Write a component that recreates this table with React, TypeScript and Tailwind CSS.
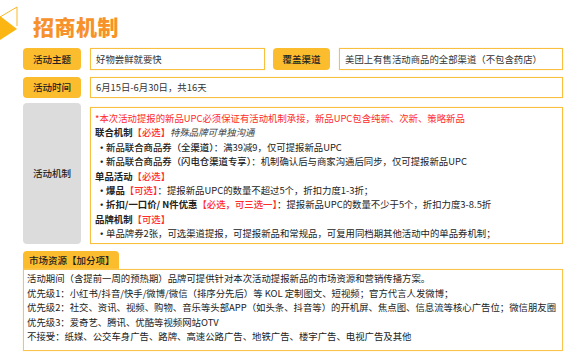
import React from "react"

const font = { fontFamily: '"Noto Sans CJK SC", "Noto Sans", sans-serif' }

function Label({ children, className = "" }: { children: React.ReactNode; className?: string }) {
  return (
    <div
      className={`flex shrink-0 items-center justify-center rounded-[4px] bg-[#fbbd2d] text-[9.5px] font-medium text-[#222] ${className}`}
    >
      {children}
    </div>
  )
}

function Value({ children, className = "" }: { children: React.ReactNode; className?: string }) {
  return (
    <div
      className={`flex items-center border border-[#f9bf3f] bg-white pl-[5px] text-[9.4px] text-[#333] shadow-[0_0_1px_#fde2a0] ${className}`}
    >
      {children}
    </div>
  )
}

function Red({ children }: { children: React.ReactNode }) {
  return <span className="font-medium text-[#ff2a2a]">{children}</span>
}

function Bullet({ children }: { children: React.ReactNode }) {
  return (
    <div className="flex whitespace-nowrap">
      <span className="w-[11px] pl-[2px] font-bold">•</span>
      <span>{children}</span>
    </div>
  )
}

export default function App() {
  return (
    <div className="h-[360px] w-[570px] overflow-hidden bg-white" style={font}>
      {/* Header */}
      <div className="flex h-[48px] items-start">
        <svg width="20" height="44" viewBox="0 0 20 44" className="shrink-0">
          <polyline points="0,17 17,7 17,26" fill="none" stroke="#f9b82a" strokeWidth="1" />
          <polygon points="0,16 17,29 0,40" fill="#fbb614" />
        </svg>
        <h1 className="ml-[13px] mt-[15px] text-[21px] font-black leading-[23px] tracking-[0.5px] text-[#f7922a]">
          招商机制
        </h1>
      </div>

      <div className="flex flex-col pl-[23px] pr-[7px]">
        {/* Row 1 */}
        <div className="flex h-[22px] gap-[9px]">
          <Label className="w-[58px]">活动主题</Label>
          <Value className="w-[175px]">好物尝鲜就要快</Value>
          <Label className="ml-[-1px] w-[57px]">覆盖渠道</Label>
          <Value className="flex-1">美团上有售活动商品的全部渠道（不包含药店）</Value>
        </div>

        {/* Row 2 */}
        <div className="mt-[7px] flex h-[21px] gap-[9px]">
          <Label className="w-[58px]">活动时间</Label>
          <Value className="flex-1">6月15日-6月30日，共16天</Value>
        </div>

        {/* Row 3 */}
        <div className="mt-[5px] flex h-[141px] gap-[9px]">
          <div className="flex w-[58px] shrink-0 items-center justify-center rounded-[4px] bg-[#dcdcdc] text-[9.5px] font-medium text-[#222]">
            活动机制
          </div>
          <div className="mt-[4px] flex-1 border border-[#f9bf3f] px-[4px] py-[3px] text-[9.4px] leading-[14.4px] text-[#222] shadow-[0_0_1px_#fde2a0]">
            <div className="whitespace-nowrap text-[#ff2a2a]">
              *本次活动提报的新品UPC必须保证有活动机制承接，新品UPC包含纯新、次新、策略新品
            </div>
            <div className="whitespace-nowrap">
              <span className="font-bold">联合机制</span>
              <Red>【必选】</Red>
              <span className="italic text-[#444]">特殊品牌可单独沟通</span>
            </div>
            <Bullet>
              <span className="font-medium">新品联合商品券（全渠道）</span>：满39减9，仅可提报新品UPC
            </Bullet>
            <Bullet>
              <span className="font-medium">新品联合商品券（闪电仓渠道专享）</span>：机制确认后与商家沟通后同步，仅可提报新品UPC
            </Bullet>
            <div className="whitespace-nowrap">
              <span className="font-bold">单品活动</span>
              <Red>【必选】</Red>
            </div>
            <Bullet>
              <span className="font-bold">爆品</span>
              <Red>【可选】</Red>：提报新品UPC的数量不超过5个，折扣力度1-3折；
            </Bullet>
            <Bullet>
              <span className="font-bold">折扣/一口价/ N件优惠</span>
              <Red>【必选，可三选一】</Red>：提报新品UPC的数量不少于5个，折扣力度3-8.5折
            </Bullet>
            <div className="whitespace-nowrap">
              <span className="font-bold">品牌机制</span>
              <Red>【可选】</Red>
            </div>
            <Bullet>单品牌券2张，可选渠道提报，可提报新品和常规品，可复用同档期其他活动中的单品券机制；</Bullet>
          </div>
        </div>

        {/* Market resources */}
        <div className="mt-[7px] flex">
          <div className="flex h-[18px] w-[96px] items-center rounded-t-[4px] bg-[#fbbd2d] pl-[6px] text-[9.5px] font-medium text-[#222]">
            市场资源【加分项】
          </div>
        </div>
        <div className="border-[1.5px] border-[#fac54c] px-[3px] pb-[6px] pt-[1px] text-[9.4px] leading-[14.5px] text-[#222] shadow-[0_0_1px_#fde2a0]">
          <div className="whitespace-nowrap">
            活动期间（含提前一周的预热期）品牌可提供针对本次活动提报新品的市场资源和营销传播方案。
          </div>
          <div className="whitespace-nowrap">
            优先级1：小红书/抖音/快手/微博/微信（排序分先后）等 KOL 定制图文、短视频；官方代言人发微博；
          </div>
          <div className="whitespace-nowrap">
            优先级2：社交、资讯、视频、购物、音乐等头部APP（如头条、抖音等）的开机屏、焦点图、信息流等核心广告位；微信朋友圈
          </div>
          <div className="whitespace-nowrap">优先级3：爱奇艺、腾讯、优酷等视频网站OTV</div>
          <div className="whitespace-nowrap">
            不接受：纸媒、公交车身广告、路牌、高速公路广告、地铁广告、楼宇广告、电视广告及其他
          </div>
        </div>
      </div>
    </div>
  )
}
